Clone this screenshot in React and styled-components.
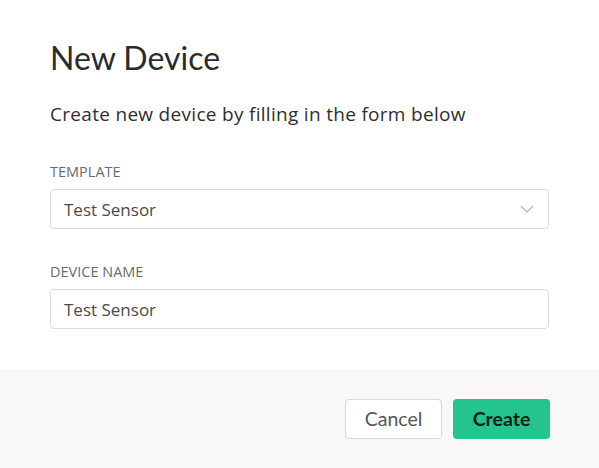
import React from 'react';
import styled, { createGlobalStyle } from 'styled-components';

const GlobalStyle = createGlobalStyle`
  html, body {
    margin: 0;
    padding: 0;
    background: #ffffff;
  }
  body {
    font-family: 'Open Sans', 'Noto Sans', sans-serif;
    color: #333;
  }
`;

const Modal = styled.div`
  width: 599px;
  height: 468px;
  display: flex;
  flex-direction: column;
  background: #fff;
`;

const Body = styled.div`
  flex: 1;
  padding: 39px 50px 0 50px;
  display: flex;
  flex-direction: column;
`;

const Title = styled.h1`
  margin: 0;
  font-family: 'Lato', sans-serif;
  font-weight: 400;
  font-size: 32px;
  line-height: 38px;
  color: #2b2b2b;
`;

const Subtitle = styled.p`
  margin: 25px 0 0 0;
  font-size: 19px;
  letter-spacing: 0.3px;
  line-height: 24px;
  color: #2f2f2f;
`;

const Field = styled.div`
  display: flex;
  flex-direction: column;
  margin-top: ${(p) => p.gap}px;
`;

const Label = styled.label`
  font-size: 14.5px;
  line-height: 18px;
  color: #6b6b6b;
  text-transform: uppercase;
  margin-bottom: 8px;
`;

const Box = styled.div`
  height: 40px;
  box-sizing: border-box;
  border: 1px solid #dcdcdc;
  border-radius: 4px;
  display: flex;
  align-items: center;
  justify-content: space-between;
  padding: 0 14px 0 13px;
  font-size: 17px;
  color: #4a4a4a;
`;

const Footer = styled.div`
  height: 99px;
  background: #f8f8f8;
  display: flex;
  justify-content: flex-end;
  align-items: center;
  gap: 11px;
  padding: 0 49px 0 0;
`;

const Button = styled.button`
  width: 97px;
  height: 40px;
  border-radius: 4px;
  font-family: 'Lato', sans-serif;
  font-size: 19.5px;
  font-weight: ${(p) => (p.primary ? 700 : 400)};
  cursor: pointer;
  border: ${(p) => (p.primary ? 'none' : '1px solid #d8d8d8')};
  background: ${(p) => (p.primary ? '#23c48e' : '#ffffff')};
  color: ${(p) => (p.primary ? '#0f1f18' : '#555')};
`;

const Chevron = () => (
  <svg width="14" height="9" viewBox="0 0 14 9" fill="none">
    <path d="M1 1l6 6 6-6" stroke="#b5b5b5" strokeWidth="1.2" />
  </svg>
);

export default function App() {
  return (
    <>
      <GlobalStyle />
      <Modal>
        <Body>
          <Title>New Device</Title>
          <Subtitle>Create new device by filling in the form below</Subtitle>
          <Field gap={37}>
            <Label>Template</Label>
            <Box>
              Test Sensor
              <Chevron />
            </Box>
          </Field>
          <Field gap={34}>
            <Label>Device Name</Label>
            <Box>Test Sensor</Box>
          </Field>
        </Body>
        <Footer>
          <Button>Cancel</Button>
          <Button primary>Create</Button>
        </Footer>
      </Modal>
    </>
  );
}
